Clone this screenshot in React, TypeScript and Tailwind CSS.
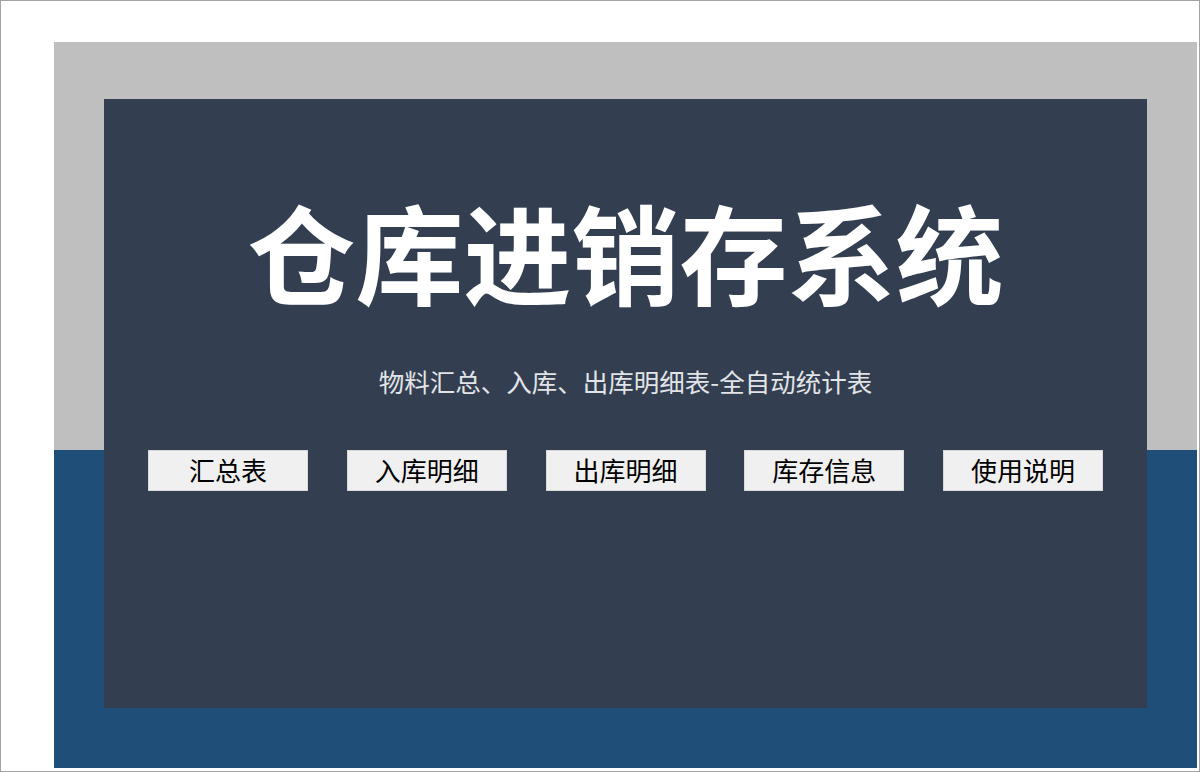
const menu = ['汇总表', '入库明细', '出库明细', '库存信息', '使用说明'];

const cjk = { fontFamily: '"Microsoft YaHei", "Noto Sans CJK SC", "Noto Sans", sans-serif' };

export default function App() {
  return (
    <div className="w-[1200px] h-[772px] bg-white border border-[#a3a3a3] pt-[41px] pl-[53px] pr-[2px] pb-[3px]" style={cjk}>
      {/* grey top band, dark blue bottom band, slate panel across both */}
      <div className="w-[1143px] h-[726px] pt-[57px] pl-[50px] bg-[linear-gradient(to_bottom,#bfbfbf_0,#bfbfbf_408px,#1f4e79_408px)]">
        <div className="w-[1043px] h-[609px] bg-[#333f50] flex flex-col items-center pt-[97px]">
          <h1 className="text-[108px] leading-none font-bold text-white">仓库进销存系统</h1>
          <p className="mt-[64px] text-[25.5px] leading-none text-[#e2e4e8]">物料汇总、入库、出库明细表-全自动统计表</p>
          <div className="mt-[56px] w-full px-[44px] flex justify-between">
            {menu.map((label) => (
              <button
                key={label}
                className="w-[160px] h-[41px] bg-[#f0f0f0] border border-[#d9d9d9] text-[26px] leading-none text-black flex items-center justify-center"
              >
                {label}
              </button>
            ))}
          </div>
        </div>
      </div>
    </div>
  );
}
